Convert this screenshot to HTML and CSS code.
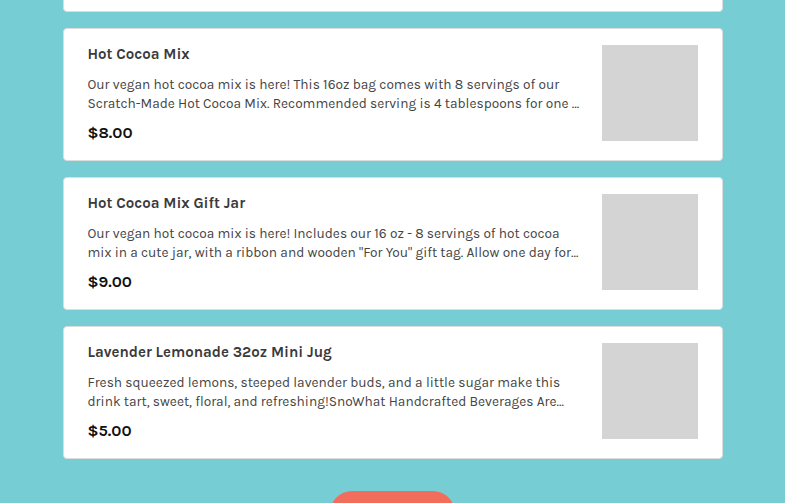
FILE: index.html
```html
<!DOCTYPE html>
<html lang="en">
<head>
<meta charset="utf-8">
<title>Menu</title>
<link rel="stylesheet" href="styles.css">
</head>
<body>
<main class="list">
  <article class="card card-prev" aria-hidden="true">
    <div class="info"></div>
    <div class="thumb"></div>
  </article>
  <article class="card">
    <div class="info">
      <h3 class="title">Hot Cocoa Mix</h3>
      <p class="desc"><span class="line">Our vegan hot cocoa mix is here! This 16oz bag comes with 8 servings of our</span><span class="line">Scratch-Made Hot Cocoa Mix. Recommended serving is 4 tablespoons for one …</span></p>
      <div class="price">$8.00</div>
    </div>
    <div class="thumb"></div>
  </article>
  <article class="card">
    <div class="info">
      <h3 class="title">Hot Cocoa Mix Gift Jar</h3>
      <p class="desc"><span class="line">Our vegan hot cocoa mix is here! Includes our 16 oz - 8 servings of hot cocoa</span><span class="line">mix in a cute jar, with a ribbon and wooden "For You" gift tag. Allow one day for…</span></p>
      <div class="price">$9.00</div>
    </div>
    <div class="thumb"></div>
  </article>
  <article class="card">
    <div class="info">
      <h3 class="title">Lavender Lemonade 32oz Mini Jug</h3>
      <p class="desc"><span class="line">Fresh squeezed lemons, steeped lavender buds, and a little sugar make this</span><span class="line">drink tart, sweet, floral, and refreshing!SnoWhat Handcrafted Beverages Are…</span></p>
      <div class="price">$5.00</div>
    </div>
    <div class="thumb"></div>
  </article>
  <div class="actions">
    <button class="more" type="button"></button>
  </div>
</main>
</body>
</html>
```
FILE: styles.css
```css
* { box-sizing: border-box; }
html, body { margin: 0; padding: 0; }
body {
  background: #76cdd4;
  font-family: "Karla", "Lato", "Liberation Sans", sans-serif;
  overflow: hidden;
  height: 503px;
}
.list {
  width: 660px;
  margin: 0 auto;
  display: flex;
  flex-direction: column;
  gap: 16px;
}
.card {
  background: #fff;
  border: 1px solid #dcdcdc;
  border-radius: 4px;
  display: flex;
  gap: 17px;
  padding: 16px 24px 19px 24px;
  height: 133px;
}
.card-prev { margin-top: -121px; }
.info {
  flex: 1;
  min-width: 0;
  display: flex;
  flex-direction: column;
}
.title {
  margin: 0;
  font-size: 15px;
  line-height: 19px;
  font-weight: 700;
  color: #3a3a3c;
}
.desc {
  margin: 11px 0 0 0;
  font-size: 13.7px;
  line-height: 18.5px;
  color: #444;
  display: flex;
  flex-direction: column;
}
.line { white-space: nowrap; overflow: hidden; }
.price {
  margin-top: 11px;
  font-size: 16px;
  line-height: 20px;
  font-weight: 700;
  color: #111;
}
.thumb {
  width: 96px;
  height: 96px;
  flex: none;
  background: #d4d4d4;
}
.actions {
  display: flex;
  justify-content: center;
  padding-top: 16px;
}
.more {
  width: 125px;
  height: 44px;
  border: none;
  border-radius: 22px;
  background: #f26d5b;
}
```
